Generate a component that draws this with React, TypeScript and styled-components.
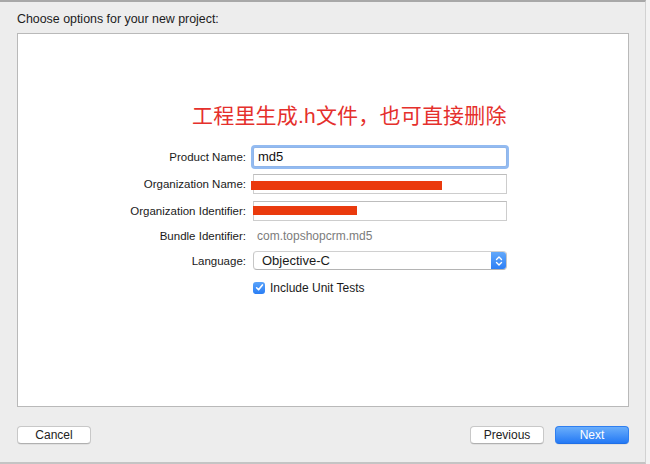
import React from "react";
import styled, { createGlobalStyle } from "styled-components";

const Global = createGlobalStyle`
  html, body { margin: 0; padding: 0; background: #ededed; }
  body { font-family: "Liberation Sans", "Noto Sans CJK SC", sans-serif; }
  * { box-sizing: border-box; }
`;

const Screen = styled.div`
  width: 650px;
  height: 464px;
  display: flex;
  background: #f3f3f3;
  overflow: hidden;
`;

const Window = styled.div`
  width: 646px;
  height: 464px;
  display: flex;
  flex-direction: column;
  background: #ededed;
  border-top: 2px solid #a8a8a8;
  border-bottom: 2px solid #c4c4c4;
  border-right: 1px solid #d2d2d2;
`;

const Heading = styled.div`
  height: 31px;
  padding: 9px 0 0 17px;
  font-size: 12.4px;
  line-height: 16px;
  color: #1c1c1c;
`;

const Panel = styled.div`
  height: 374px;
  margin: 0 0 0 17px;
  width: 612px;
  background: #ffffff;
  border: 1px solid #b9b9b9;
  display: flex;
  flex-direction: column;
`;

const Note = styled.div`
  margin-top: 69px;
  padding-left: 174px;
  font-size: 21px;
  line-height: 26px;
  color: #e5302c;
  font-family: "Liberation Sans", "Noto Sans CJK SC", sans-serif;
  letter-spacing: 0.2px;
`;

const Form = styled.div`
  margin-top: 18px;
  display: grid;
  grid-template-columns: 228px 254px;
  grid-template-rows: 20px 20px 20px 16px 19px 20px;
  column-gap: 7px;
  row-gap: 7px;
`;

const Label = styled.div`
  text-align: right;
  font-size: 11.5px;
  line-height: 14px;
  color: #1a1a1a;
  align-self: center;
`;

const Field = styled.div<{ $focus?: boolean }>`
  position: relative;
  height: 20px;
  background: #fff;
  border: 1px solid ${(p) => (p.$focus ? "#8fb5ea" : "#cdcdcd")};
  border-top-color: ${(p) => (p.$focus ? "#8fb5ea" : "#bdbdbd")};
  box-shadow: ${(p) => (p.$focus ? "0 0 0 2px #93bbf1" : "none")};
  border-radius: ${(p) => (p.$focus ? "2px" : "0")};
  font-size: 13px;
  line-height: 18px;
  padding-left: 4px;
  color: #111;
`;

const Redaction = styled.div`
  position: absolute;
  left: -3px;
  top: 6px;
  height: 9px;
  background: #ea3a0d;
`;

const Plain = styled.div`
  font-size: 12px;
  line-height: 14px;
  color: #7c7c7c;
  align-self: center;
  padding-left: 4px;
`;

const Select = styled.div`
  height: 19px;
  display: flex;
  align-items: stretch;
  border: 1px solid #c6c6c6;
  border-top-color: #d0d0d0;
  border-bottom-color: #b4b4b4;
  border-radius: 4px;
  overflow: hidden;
  background: #fff;
`;

const SelectText = styled.div`
  flex: 1;
  font-size: 13px;
  line-height: 17px;
  padding-left: 8px;
  color: #1a1a1a;
`;

const Stepper = styled.div`
  width: 15px;
  background: linear-gradient(#62a8fa, #2d7ff6);
  display: flex;
  align-items: center;
  justify-content: center;
`;

const CheckRow = styled.label`
  grid-column: 2;
  display: flex;
  align-items: center;
  gap: 5px;
  font-size: 12px;
  color: #1a1a1a;
  padding-top: 1px;
`;

const Box = styled.span`
  width: 12px;
  height: 12px;
  border-radius: 3px;
  background: linear-gradient(#5aa3fa, #2a7ef5);
  display: flex;
  align-items: center;
  justify-content: center;
`;

const Footer = styled.div`
  display: flex;
  padding: 19px 16px 0 17px;
  align-items: flex-start;
`;

const Spacer = styled.div`
  flex: 1;
`;

const Button = styled.button<{ $primary?: boolean }>`
  width: 74px;
  height: 18px;
  margin-left: ${(p) => (p.$primary ? "11px" : "0")};
  padding: 0;
  border-radius: 4px;
  font-family: "Liberation Sans", sans-serif;
  font-size: 12px;
  line-height: 16px;
  color: ${(p) => (p.$primary ? "#ffffff" : "#222")};
  background: ${(p) => (p.$primary ? "linear-gradient(#6aaefb, #2479f5)" : "#ffffff")};
  border: 1px solid ${(p) => (p.$primary ? "#2f7ff0" : "#c8c8c8")};
  border-bottom-color: ${(p) => (p.$primary ? "#1f6fe6" : "#b0b0b0")};
  box-shadow: 0 0.5px 0.5px rgba(0, 0, 0, 0.1);
`;

export default function App() {
  return (
    <Screen>
      <Global />
      <Window>
        <Heading>Choose options for your new project:</Heading>
        <Panel>
          <Note>工程里生成.h文件，也可直接删除</Note>
          <Form>
            <Label>Product Name:</Label>
            <Field $focus>md5</Field>

            <Label>Organization Name:</Label>
            <Field>
              <Redaction style={{ width: 191 }} />
            </Field>

            <Label>Organization Identifier:</Label>
            <Field>
              <Redaction style={{ width: 104, left: -1, top: 4 }} />
            </Field>

            <Label>Bundle Identifier:</Label>
            <Plain>com.topshopcrm.md5</Plain>

            <Label>Language:</Label>
            <Select>
              <SelectText>Objective-C</SelectText>
              <Stepper>
                <svg width="8" height="12" viewBox="0 0 8 12" fill="none">
                  <path d="M1.5 4.5 L4 2 L6.5 4.5" stroke="#fff" strokeWidth="1.4" strokeLinecap="round" strokeLinejoin="round" />
                  <path d="M1.5 7.5 L4 10 L6.5 7.5" stroke="#fff" strokeWidth="1.4" strokeLinecap="round" strokeLinejoin="round" />
                </svg>
              </Stepper>
            </Select>

            <CheckRow>
              <Box>
                <svg width="9" height="9" viewBox="0 0 9 9" fill="none">
                  <path d="M1.6 4.8 L3.6 6.8 L7.4 1.9" stroke="#fff" strokeWidth="1.6" strokeLinecap="round" strokeLinejoin="round" />
                </svg>
              </Box>
              Include Unit Tests
            </CheckRow>
          </Form>
        </Panel>
        <Footer>
          <Button>Cancel</Button>
          <Spacer />
          <Button>Previous</Button>
          <Button $primary>Next</Button>
        </Footer>
      </Window>
    </Screen>
  );
}
